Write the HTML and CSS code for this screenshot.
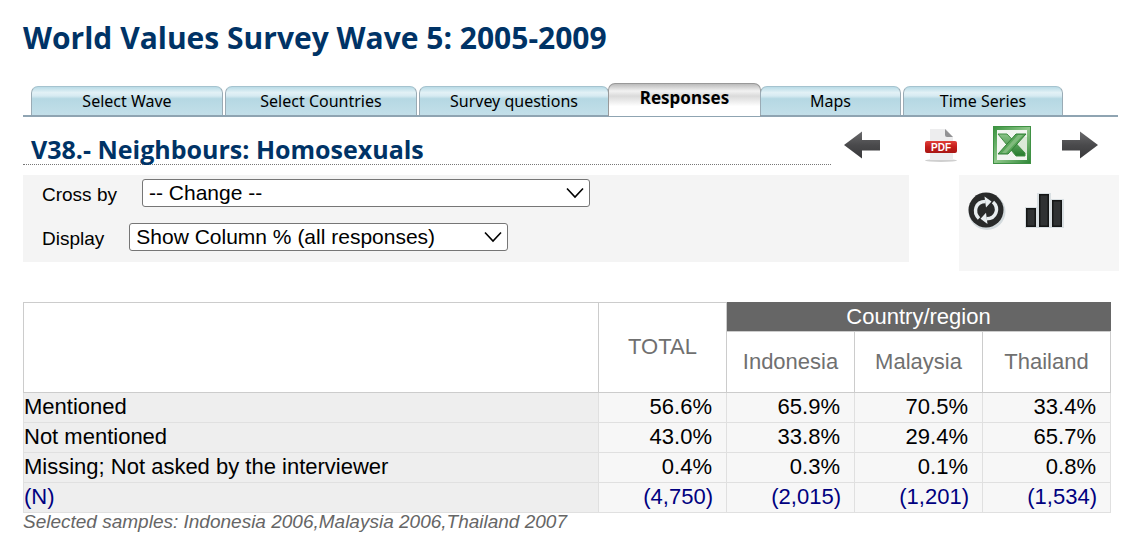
FILE: index.html
```html
<!DOCTYPE html>
<html lang="en">
<head>
<meta charset="utf-8">
<title>World Values Survey Wave 5: 2005-2009</title>
<link rel="stylesheet" href="styles.css">
</head>
<body>
<main class="page">
  <h1 class="title">World Values Survey Wave 5: 2005-2009</h1>
  <nav class="tabs">
    <a class="tab" href="#">Select Wave</a>
    <a class="tab" href="#">Select Countries</a>
    <a class="tab tab-joined" href="#">Survey questions</a>
    <a class="tab tab-active" href="#" aria-current="page">Responses</a>
    <a class="tab tab-short tab-joined-left" href="#">Maps</a>
    <a class="tab tab-medium" href="#">Time Series</a>
  </nav>
  <div class="question">
    <h2 class="question-title">V38.- Neighbours: Homosexuals</h2>
    <div class="actions">
      <button class="icon-button icon-previous" type="button" aria-label="Previous">
        <svg width="38" height="30" viewBox="0 0 38 30"><defs><linearGradient id="g1" x1="0" y1="0" x2="0" y2="1"><stop offset="0" stop-color="#6a6a6c"/><stop offset=".5" stop-color="#4a4a4c"/><stop offset="1" stop-color="#38383a"/></linearGradient></defs><path d="M1 15 19 1.500V10H37V20.500H19V28.500Z" fill="url(#g1)"/></svg>
      </button>
      <button class="icon-button icon-pdf" type="button" aria-label="PDF">
        <svg width="36" height="36" viewBox="0 0 36 36"><defs><linearGradient id="g2" x1="0" y1="0" x2="0" y2="1"><stop offset="0" stop-color="#e0403a"/><stop offset=".5" stop-color="#c41c1a"/><stop offset="1" stop-color="#a81714"/></linearGradient></defs><ellipse cx="18" cy="33.500" rx="16" ry="1.500" fill="#cfcfcf"/><path d="M7 2H23L30 10V33H7Z" fill="#ededee"/><path d="M22 2 30 10H24Q22 10 22 8Z" fill="#929294"/><rect x="2" y="14" width="32" height="12" rx="2" fill="url(#g2)"/><text class="pdf-label" x="18" y="24" text-anchor="middle">PDF</text></svg>
      </button>
      <button class="icon-button" type="button" aria-label="Excel">
        <svg width="38" height="38" viewBox="0 0 38 38"><defs><linearGradient id="g3" x1="0" y1="0" x2="1" y2="1"><stop offset="0" stop-color="#3b9440"/><stop offset=".5" stop-color="#8fc78a"/><stop offset="1" stop-color="#2f8738"/></linearGradient><linearGradient id="g4" x1="0" y1="0" x2="0" y2="1"><stop offset="0" stop-color="#8bc489"/><stop offset="1" stop-color="#237a2b"/></linearGradient></defs><rect width="38" height="38" fill="#3f9144"/><rect x="1" y="1" width="36" height="36" fill="url(#g3)"/><rect x="4" y="4" width="30" height="30" fill="#f2f5f1"/><path d="M20 11H34V28H20Z" fill="#dbe9d9"/><path d="M5 8H14L32 27V30H23Z" fill="url(#g4)" stroke="#418e44"/><path d="M23 8H33L15 28H5Z" fill="#58a659" stroke="#317f36"/><path d="M25 9H30L13 27H9Z" fill="#80bb7d"/></svg>
      </button>
      <button class="icon-button" type="button" aria-label="Next">
        <svg width="38" height="30" viewBox="0 0 38 30"><path d="M37 15 19 1.500V10H1V20.500H19V28.500Z" fill="url(#g1)"/></svg>
      </button>
    </div>
  </div>
  <div class="controls">
    <form class="filters">
      <div class="field">
        <label for="cross">Cross by</label>
        <span class="picker picker-wide"><select id="cross"><option>-- Change --</option></select>
        <svg class="chevron" width="18" height="12" viewBox="0 0 18 12"><path d="M1 1.500 9 10 17 1.500" fill="none" stroke="#000" stroke-width="1.600"/></svg></span>
      </div>
      <div class="field">
        <label for="display">Display</label>
        <span class="picker"><select id="display"><option>Show Column % (all responses)</option></select>
        <svg class="chevron" width="18" height="12" viewBox="0 0 18 12"><path d="M1 1.500 9 10 17 1.500" fill="none" stroke="#000" stroke-width="1.600"/></svg></span>
      </div>
    </form>
    <div class="tools">
      <button class="icon-button" type="button" aria-label="Refresh">
        <svg width="40" height="42" viewBox="0 0 40 42"><circle cx="20" cy="21.500" r="18.500" fill="#d3dadd"/><circle cx="19" cy="20" r="17.500" fill="#292a2a"/><g fill="none" stroke="#e8edef" stroke-width="3.400"><path d="M12 28.500C5.500 22 8.500 11.500 18.500 11.500"/><path d="M26 12C32.500 18 29.500 28.800 19.500 28.800"/></g><path d="M17.500 6.500 24.500 11.500 19 17.500ZM20.500 34 13.500 28.800 19 22.800Z" fill="#e8edef"/></svg>
      </button>
      <button class="icon-button" type="button" aria-label="Chart">
        <svg width="42" height="40" viewBox="0 0 42 40"><path d="M1 17H13V3H27V9H40V38H1Z" fill="#d9dfe2"/><g fill="#303233" stroke="#151616" stroke-width="1.500"><rect x="2.750" y="18.750" width="8.500" height="17.500"/><rect x="15.750" y="4.750" width="8.500" height="31.500"/><rect x="28.750" y="10.750" width="8.500" height="25.500"/></g></svg>
      </button>
    </div>
  </div>
  <table class="results">
    <colgroup><col><col class="num"><col class="num"><col class="num"><col class="num"></colgroup>
    <thead>
      <tr><td rowspan="2"></td><th rowspan="2" scope="col">TOTAL</th><th class="group" colspan="3" scope="colgroup">Country/region</th></tr>
      <tr class="countries"><th scope="col">Indonesia</th><th scope="col">Malaysia</th><th scope="col">Thailand</th></tr>
    </thead>
    <tbody>
      <tr><th scope="row">Mentioned</th><td>56.6%</td><td>65.9%</td><td>70.5%</td><td>33.4%</td></tr>
      <tr><th scope="row">Not mentioned</th><td>43.0%</td><td>33.8%</td><td>29.4%</td><td>65.7%</td></tr>
      <tr><th scope="row">Missing; Not asked by the interviewer</th><td>0.4%</td><td>0.3%</td><td>0.1%</td><td>0.8%</td></tr>
      <tr class="count"><th scope="row">(N)</th><td>(4,750)</td><td>(2,015)</td><td>(1,201)</td><td>(1,534)</td></tr>
    </tbody>
  </table>
  <p class="samples">Selected samples: Indonesia 2006,Malaysia 2006,Thailand 2007</p>
</main>
</body>
</html>
```
FILE: styles.css
```css
* { box-sizing: border-box; }
body {
  margin: 0;
  background: #fff;
  color: #000;
  font-family: "Liberation Sans", Arial, sans-serif;
}
.page { padding: 16px 13px 16px 23px; }
.title, .question-title {
  margin: 0;
  color: #003366;
  font-family: "Trebuchet MS", "Open Sans", sans-serif;
  font-weight: 700;
}
.title { font-size: 30px; line-height: 44px; }
.tabs {
  display: flex;
  align-items: flex-end;
  gap: 2px;
  margin: 23px 1px 0 0;
  padding-left: 8px;
  border-bottom: 2px solid #8fa4b2;
}
.tab {
  flex: 0 1 192px;
  height: 29px;
  border: 1px solid #9aabb5;
  border-top-color: #a5c3cf;
  border-bottom: 0;
  border-radius: 7px 7px 0 0;
  background: linear-gradient(#b9dbe6, #e2f1f6 20%, #d6eaf1 32%, #b5d8e3 42%, #c3dfe9);
  color: #000;
  font-family: Tahoma, "Noto Sans", sans-serif;
  font-size: 16px;
  line-height: 28px;
  text-align: center;
  text-decoration: none;
}
.tab-joined { margin-right: -3px; flex-basis: 190px; }
.tab-active {
  flex-basis: 153px;
  height: 33px;
  margin-bottom: -1px;
  border-color: #999;
  background: linear-gradient(#bbb, #f2f2f2 22%, #dadada 38%, #fff 70%);
  font-size: 17px;
  font-weight: 700;
}
.tab-joined-left { margin-left: -3px; }
.tab-short { flex-basis: 141px; }
.tab-medium { flex-basis: 160px; }
.question { display: flex; align-items: flex-start; justify-content: space-between; }
.question-title {
  flex: 0 1 808px;
  padding: 17px 0 0 8px;
  border-bottom: 1px dotted #777;
  font-size: 25px;
  line-height: 30px;
}
.actions { display: flex; align-items: center; gap: 30px; padding: 8px 20px 0 0; height: 47px; }
.icon-previous { margin-right: 12px; }
.icon-pdf { margin-right: 4px; }
.icon-button { display: block; padding: 0; border: 0; background: none; line-height: 0; }
.pdf-label { fill: #fff; font: 700 10px "Liberation Sans", Arial, sans-serif; }
.controls { display: flex; align-items: flex-start; gap: 50px; margin-top: 10px; }
.filters {
  flex: 1;
  display: flex;
  flex-direction: column;
  gap: 16px;
  padding: 4px 19px 11px;
  background: #f4f4f4;
}
.field { display: flex; align-items: center; gap: 25px; }
.field label { padding-top: 3px; font-size: 19px; line-height: 24px; }
.picker { position: relative; width: 379px; }
.picker-wide { width: 448px; }
.picker select {
  display: block;
  width: 100%;
  height: 28px;
  padding: 0 6px 2px;
  border: 1px solid #767676;
  border-radius: 3px;
  background: #fff;
  color: #000;
  font: 21px "Liberation Sans", Arial, sans-serif;
  appearance: none;
}
.chevron { position: absolute; top: 8px; right: 6px; pointer-events: none; }
.tools { display: flex; gap: 17px; align-items: flex-start; width: 160px; height: 96px; padding: 15px 8px; background: #f6f6f6; }
.results { width: calc(100% - 8px); margin-top: 31px; border-collapse: collapse; table-layout: fixed; font-size: 22px; line-height: 27px; }
.num { width: 128px; }
.results th, .results td { padding: 0 0 2px; border: 1px solid #e0e0e0; font-weight: 400; }
.results thead th, .results thead td { border-color: #ccc; color: #707070; }
.results thead .group { padding: 0 0 1px; border-color: #666 #666 #ccc; background: #666; color: #fff; }
.countries th { height: 61px; }
.results tbody th { background: #eee; text-align: left; }
.results tbody td { padding-right: 14px; background: #f7f7f7; text-align: right; }
.results .count th, .results .count td { color: #000080; }
.results .count td { padding-right: 13px; }
.samples { margin: 0; color: #666; font-size: 19px; font-style: italic; line-height: 18px; }
```
